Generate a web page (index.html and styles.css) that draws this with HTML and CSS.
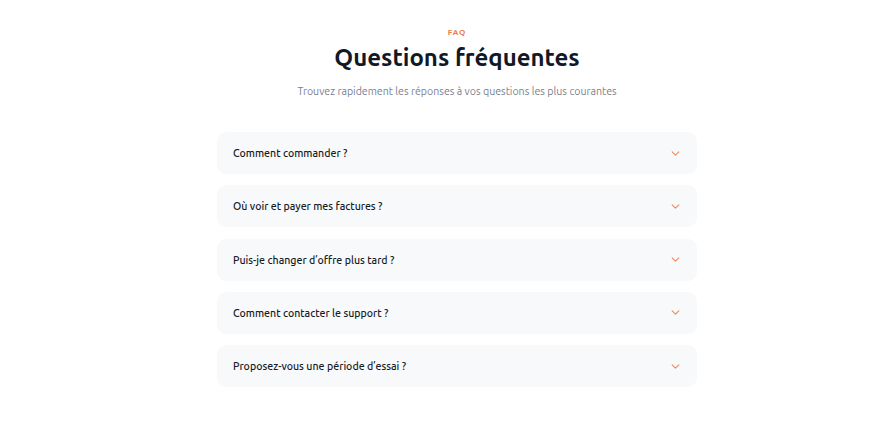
FILE: index.html
```html
<!DOCTYPE html>
<html lang="fr">
<head>
<meta charset="utf-8">
<title>FAQ</title>
<link rel="stylesheet" href="styles.css">
</head>
<body>
<section class="faq">
  <header class="faq-head">
    <p class="eyebrow">FAQ</p>
    <h2 class="title">Questions fréquentes</h2>
    <p class="subtitle">Trouvez rapidement les réponses à vos questions les plus courantes</p>
  </header>
  <div class="list">
    <div class="item"><span class="q">Comment commander ?</span><svg class="chev" viewBox="0 0 10 6" width="9" height="5"><path d="M1 1l4 4 4-4" fill="none" stroke="#f08a5d" stroke-width="1.3" stroke-linecap="round" stroke-linejoin="round"/></svg></div>
    <div class="item"><span class="q">Où voir et payer mes factures ?</span><svg class="chev" viewBox="0 0 10 6" width="9" height="5"><path d="M1 1l4 4 4-4" fill="none" stroke="#f08a5d" stroke-width="1.3" stroke-linecap="round" stroke-linejoin="round"/></svg></div>
    <div class="item"><span class="q">Puis-je changer d’offre plus tard ?</span><svg class="chev" viewBox="0 0 10 6" width="9" height="5"><path d="M1 1l4 4 4-4" fill="none" stroke="#f08a5d" stroke-width="1.3" stroke-linecap="round" stroke-linejoin="round"/></svg></div>
    <div class="item"><span class="q">Comment contacter le support ?</span><svg class="chev" viewBox="0 0 10 6" width="9" height="5"><path d="M1 1l4 4 4-4" fill="none" stroke="#f08a5d" stroke-width="1.3" stroke-linecap="round" stroke-linejoin="round"/></svg></div>
    <div class="item"><span class="q">Proposez-vous une période d’essai ?</span><svg class="chev" viewBox="0 0 10 6" width="9" height="5"><path d="M1 1l4 4 4-4" fill="none" stroke="#f08a5d" stroke-width="1.3" stroke-linecap="round" stroke-linejoin="round"/></svg></div>
  </div>
</section>
</body>
</html>
```
FILE: styles.css
```css
html, body {
  margin: 0;
  padding: 0;
  background: #ffffff;
}
body {
  font-family: "Ubuntu", "Noto Sans", "DejaVu Sans", sans-serif;
  color: #111827;
}
.faq {
  padding: 28px 0 40px 23px;
}
.faq-head {
  text-align: center;
}
.eyebrow {
  margin: 0;
  font-size: 8px;
  line-height: 10px;
  font-weight: 700;
  letter-spacing: 0.8px;
  color: #ee7a4c;
}
.title {
  margin: 5px 0 0;
  font-size: 24px;
  line-height: 30px;
  font-weight: 700;
  color: #121826;
}
.subtitle {
  margin: 10px 0 0;
  font-size: 10.6px;
  line-height: 16px;
  color: #7a808c;
}
.list {
  width: 480px;
  margin: 33px auto 0;
  display: flex;
  flex-direction: column;
  gap: 11.3px;
}
.item {
  display: flex;
  align-items: center;
  justify-content: space-between;
  height: 42px;
  padding: 0 17px 0 16px;
  box-sizing: border-box;
  background: #f8f9fb;
  border-radius: 9px;
}
.q {
  font-size: 10.6px;
  font-weight: 500;
  color: #161b26;
}
.chev {
  display: block;
}
```
